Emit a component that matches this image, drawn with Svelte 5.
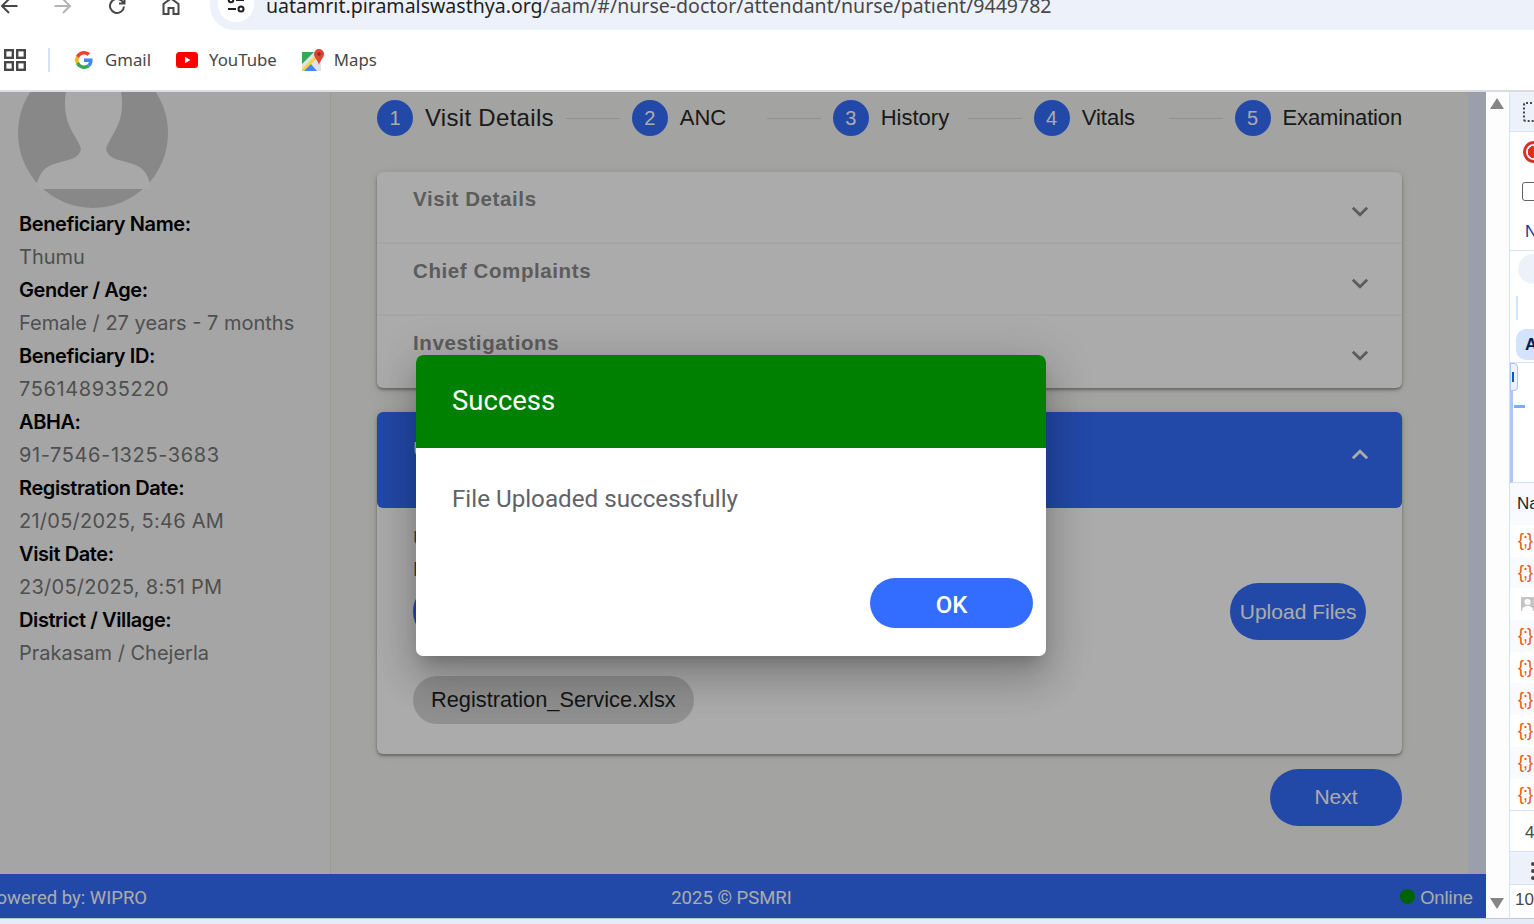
<script>
	const bookmarks = ['Gmail', 'YouTube', 'Maps'];

	const steps = [
		{ n: 1, label: 'Visit Details', big: true },
		{ n: 2, label: 'ANC' },
		{ n: 3, label: 'History' },
		{ n: 4, label: 'Vitals' },
		{ n: 5, label: 'Examination', last: true }
	];

	const fields = [
		{ label: 'Beneficiary Name:', value: 'Thumu' },
		{ label: 'Gender / Age:', value: 'Female / 27 years - 7 months' },
		{ label: 'Beneficiary ID:', value: '756148935220', kind: 'num' },
		{ label: 'ABHA:', value: '91-7546-1325-3683', kind: 'num' },
		{ label: 'Registration Date:', value: '21/05/2025, 5:46 AM', kind: 'date' },
		{ label: 'Visit Date:', value: '23/05/2025, 8:51 PM', kind: 'date' },
		{ label: 'District / Village:', value: 'Prakasam / Chejerla' }
	];

	const panels = ['Visit Details', 'Chief Complaints', 'Investigations'];

	// devtools network rows, clipped by the window edge
	const rows = ['js', 'js', 'img', 'js', 'js', 'js', 'js', 'js', 'js'];
</script>

<div class="window">
	<header class="chrome">
		<div class="toolbar">
			<svg class="nav" viewBox="0 0 18 18" fill="none" stroke="#474747" stroke-width="2">
				<path d="M17.500 9H2M9 2 2 9l7 7" />
			</svg>
			<svg class="nav" viewBox="0 0 18 18" fill="none" stroke="#b4b4b4" stroke-width="2">
				<path d="M.5 9H16M9 2l7 7-7 7" />
			</svg>
			<svg class="nav" viewBox="0 0 18 18" fill="none" stroke="#474747" stroke-width="2">
				<path d="M16 9.500A7 7 0 1 1 13.500 3.600L16 6M16.500 1v5.500H11" />
			</svg>
			<svg class="nav" viewBox="0 0 18 18" fill="none" stroke="#474747" stroke-width="2">
				<path d="M1.500 17V7L9 1.500 16.500 7v10h-5v-6h-5v6z" />
			</svg>
			<div class="address">
				<span class="site-icon">
					<svg viewBox="0 0 20 20" width="20" height="20" fill="none" stroke="#1f1f1f" stroke-width="2">
						<circle cx="5" cy="5" r="2.300" />
						<path d="M10 5h8M2 14h8" />
						<circle cx="15" cy="14" r="2.500" />
					</svg>
				</span>
				<span class="url"><b>uatamrit.piramalswasthya.org</b>/aam/#/nurse-doctor/attendant/nurse/patient/9449782</span>
			</div>
		</div>
		<div class="bookmarks">
			<svg class="apps" viewBox="0 0 22 22" fill="none" stroke="#474747" stroke-width="2.400">
				<rect x="1.200" y="1.200" width="7.600" height="7.600" />
				<rect x="13.200" y="1.200" width="7.600" height="7.600" />
				<rect x="1.200" y="13.200" width="7.600" height="7.600" />
				<rect x="13.200" y="13.200" width="7.600" height="7.600" />
			</svg>
			<span class="divider"></span>
			{#each bookmarks as name}
				<span class="bookmark {name.toLowerCase()}">
					{#if name === 'Gmail'}
						<svg viewBox="0 0 48 48" width="18" height="18">
							<path fill="#EA4335" d="M24 9.500c3.540 0 6.710 1.220 9.210 3.600l6.850-6.850C35.900 2.380 30.470 0 24 0 14.620 0 6.510 5.380 2.560 13.220l7.980 6.190C12.430 13.720 17.740 9.500 24 9.500z" />
							<path fill="#4285F4" d="M46.980 24.550c0-1.570-.15-3.090-.38-4.550H24v9.020h12.940c-.58 2.960-2.260 5.480-4.780 7.180l7.730 6c4.510-4.180 7.090-10.360 7.090-17.650z" />
							<path fill="#FBBC05" d="M10.530 28.590c-.48-1.450-.76-2.990-.76-4.590s.27-3.140.76-4.590l-7.980-6.190C.92 16.460 0 20.120 0 24c0 3.880.92 7.540 2.560 10.780l7.970-6.190z" />
							<path fill="#34A853" d="M24 48c6.480 0 11.930-2.130 15.890-5.810l-7.730-6c-2.150 1.450-4.920 2.300-8.160 2.300-6.260 0-11.570-4.220-13.470-9.910l-7.980 6.190C6.510 42.620 14.620 48 24 48z" />
						</svg>
					{:else if name === 'YouTube'}
						<svg viewBox="0 0 22 16" width="22" height="16">
							<rect width="22" height="16" rx="3.500" fill="#f00" />
							<path d="M9 4.800v6.400l5.400-3.200z" fill="#fff" />
						</svg>
					{:else}
						<svg viewBox="0 0 22 22" width="22" height="22">
							<path d="M0 3h19v19H0z" fill="#dfe3e6" />
							<path d="M0 3h12L0 15z" fill="#34a853" />
							<path d="M0 22h15l-7-8z" fill="#4285f4" />
							<path d="M0 20 14 6l2 2L2 22H0z" fill="#fbd13c" />
							<path d="M17 0a5 5 0 0 1 5 5c0 3.500-3.400 5.500-5 11-1.600-5.500-5-7.500-5-11a5 5 0 0 1 5-5z" fill="#db4437" />
							<circle cx="17" cy="5" r="1.800" fill="#8e2a22" />
						</svg>
					{/if}
					<span>{name}</span>
				</span>
			{/each}
		</div>
	</header>

	<div class="workspace">
		<div class="stage">
			<div class="page">
				<div class="content">
					<aside class="sidebar">
						<svg class="avatar" viewBox="0 0 150 150" width="150" height="150">
							<circle cx="75" cy="75" r="75" fill="#cbcbcb" />
							<path d="M18 131C20 118 24 110 36 106 48 102 58 102 62 94 64 90 62 88 60 84 54 72 47 65 47 45 47 20 60 8 75.500 8 91 8 104 20 104 45 104 65 97 72 91 84 89 88 87 90 89 94 93 102 103 102 115 106 127 110 131 118 133 131z" fill="#fbfbfb" />
						</svg>
						{#each fields as field}
							<div class="label">{field.label}</div>
							<div class="value {field.kind ?? ''}">{field.value}</div>
						{/each}
					</aside>

					<main class="main">
						<nav class="stepper">
							{#each steps as step}
								<span class="circle">{step.n}</span>
								<span class="step-label" class:big={step.big} class:tight={step.last}>{step.label}</span>
								{#if !step.last}<span class="line"></span>{/if}
							{/each}
						</nav>

						<section class="card accordion">
							{#each panels as title}
								<div class="panel">
									<span class="panel-title">{title}</span>
									<svg class="chevron" viewBox="0 0 16 10" fill="none" stroke="#8a8a8a" stroke-width="2.600">
										<path d="M1.500 1.500 8 8l6.500-6.500" />
									</svg>
								</div>
							{/each}
						</section>

						<section class="card upload">
							<div class="upload-head">
								<span>Upload Files</span>
								<svg class="chevron up" viewBox="0 0 16 10" fill="none" stroke="#fff" stroke-width="2.600">
									<path d="M1.500 8.500 8 2l6.500 6.500" />
								</svg>
							</div>
							<div class="upload-body">
								<p class="hint">Upload</p>
								<p class="hint">File</p>
								<div class="actions">
									<button class="pill">Choose</button>
									<button class="pill">Upload Files</button>
								</div>
								<span class="chip">Registration_Service.xlsx</span>
							</div>
						</section>

						<div class="next-row">
							<button class="pill next">Next</button>
						</div>
					</main>

					<div class="gutter"></div>
				</div>

				<footer class="footer">
					<span class="powered">Powered by: WIPRO</span>
					<span>2025 © PSMRI</span>
					<span class="online"><i></i>Online</span>
				</footer>
			</div>

			<div class="overlay">
				<div class="dialog">
					<div class="dialog-head">Success</div>
					<div class="dialog-body">File Uploaded successfully</div>
					<div class="dialog-actions">
						<button class="ok">OK</button>
					</div>
				</div>
			</div>
		</div>

		<div class="page-scroll">
			<span class="arrow"></span>
			<span class="arrow down"></span>
		</div>

		<div class="devtools">
			<div class="dt-row dt-top">
				<span class="dt-dots"></span>
			</div>
			<div class="dt-row dt-rec"><span class="rec"></span></div>
			<div class="dt-row dt-check"><span class="box"></span></div>
			<div class="dt-row dt-n">N</div>
			<div class="dt-filter">
				<span class="dt-search"></span>
				<span class="dt-bar"></span>
				<span class="dt-all">A</span>
			</div>
			<div class="dt-timeline">
				<span class="dt-handle"></span>
				<span class="dt-dash"></span>
			</div>
			<div class="dt-name">Na</div>
			{#each rows as kind, i}
				<div class="dt-file" class:alt={i % 2 === 1}>
					{#if kind === 'img'}
						<svg class="dt-img" viewBox="0 0 16 14" width="16" height="14">
							<rect width="16" height="14" fill="#c4c4c4" />
							<circle cx="6.500" cy="5" r="3" fill="#fff" />
							<path d="M1 14c0-4 3-5 5.500-5s5.500 1 5.500 5z" fill="#fff" />
						</svg>
					{:else}
						<span class="dt-js">{'{;}'}</span>
					{/if}
				</div>
			{/each}
			<div class="dt-count">4</div>
			<div class="dt-more"><span class="dt-kebab"></span></div>
			<div class="dt-ten">10</div>
		</div>
	</div>

	<div class="taskbar-edge"></div>
</div>

<style>
	:global(body) {
		margin: 0;
		overflow: hidden;
		background: #e4ecf8;
	}

	.window {
		width: 1534px;
		height: 924px;
		overflow: hidden;
		display: flex;
		flex-direction: column;
		font-family: 'Liberation Sans', Arial, sans-serif;
	}

	/* browser chrome */
	.chrome {
		height: 92px;
		flex: none;
		background: #fff;
		border-bottom: 2px solid #dadce0;
		box-sizing: border-box;
	}

	.toolbar {
		height: 30px;
		display: flex;
		overflow: hidden;
		align-items: flex-start;
	}

	.nav {
		width: 18px;
		height: 18px;
		margin-top: -3px;
		margin-right: 36px;
		flex: none;
	}

	.address {
		margin-left: -6px;
		flex: 1;
		height: 30px;
		background: #edf2fa;
		border-bottom-left-radius: 24px;
		display: flex;
		padding-left: 8px;
		gap: 12px;
		min-width: 0;
	}

	.site-icon {
		width: 36px;
		height: 22px;
		flex: none;
		background: #fff;
		border-radius: 0 0 18px 18px;
		display: flex;
		justify-content: center;
	}

	.site-icon svg {
		margin-top: -5px;
	}

	.url {
		font-family: 'Noto Sans', sans-serif;
		font-size: 19.540px;
		line-height: 18px;
		color: #474747;
		white-space: nowrap;
		margin-top: -3px;
	}

	.url b {
		font-weight: 400;
		color: #1f1f1f;
	}

	.bookmarks {
		height: 60px;
		display: flex;
		align-items: center;
	}

	.apps {
		width: 22px;
		height: 22px;
		margin-left: 4px;
		flex: none;
	}

	.divider {
		width: 2px;
		height: 24px;
		background: #d3e3fd;
		margin: 0 25px 0 22px;
	}

	.bookmark {
		display: flex;
		align-items: center;
		font-family: 'Noto Sans', sans-serif;
		font-size: 16.800px;
		color: #474747;
		margin-right: 25px;
	}

	.bookmark span {
		margin-top: -2px;
	}

	.bookmark svg {
		margin-right: 12px;
	}

	.bookmark.youtube svg {
		margin-right: 11px;
	}

	.bookmark.maps svg {
		margin-right: 10px;
	}

	/* application */
	.workspace {
		height: 826px;
		flex: none;
		display: flex;
	}

	.stage {
		width: 1486px;
		flex: none;
		position: relative;
		overflow: hidden;
	}

	.page {
		height: 100%;
		display: flex;
		flex-direction: column;
	}

	.content {
		flex: 1;
		display: flex;
		min-height: 0;
		background: #f3f3f0;
		overflow: hidden;
	}

	.sidebar {
		width: 331px;
		flex: none;
		box-sizing: border-box;
		background: #f7f7f7;
		border-right: 1px solid #e6e6e6;
		padding-left: 19px;
		font-family: Inter, sans-serif;
		line-height: 33px;
	}

	.avatar {
		display: block;
		margin: -34px 0 0 -1px;
	}

	.label {
		color: #000;
		font-size: 20px;
		font-weight: 600;
		letter-spacing: -0.4px;
	}

	.value {
		color: #767676;
		font-size: 20px;
	}

	.value.num {
		letter-spacing: 0.6px;
	}

	.value.date {
		letter-spacing: 0.25px;
	}

	.main {
		width: 1137px;
		flex: none;
		box-sizing: border-box;
		padding: 8px 66px 0 46px;
	}

	.stepper {
		height: 36px;
		display: flex;
		align-items: center;
	}

	.circle {
		width: 36px;
		height: 36px;
		flex: none;
		border-radius: 50%;
		background: #336dfb;
		color: #fff;
		font-size: 20px;
		display: flex;
		align-items: center;
		justify-content: center;
	}

	.step-label {
		margin-left: 12px;
		min-width: 75px;
		font-size: 22px;
		color: #272727;
		white-space: nowrap;
	}

	.step-label.big {
		font-size: 24px;
		letter-spacing: 0.3px;
	}

	.step-label.tight {
		letter-spacing: -0.15px;
	}

	.line {
		flex: 1;
		height: 1px;
		background: #d8d8d8;
		margin: 0 12px;
	}

	.card {
		background: #fff;
		border-radius: 6px;
		box-shadow: 0 2px 3px rgba(0, 0, 0, 0.32), 0 1px 8px rgba(0, 0, 0, 0.1);
	}

	.accordion {
		margin-top: 36px;
	}

	.panel {
		height: 72px;
		box-sizing: border-box;
		padding: 15px 33px 0 36px;
		display: flex;
		justify-content: space-between;
		border-bottom: 2px solid #f8f8f8;
		overflow: hidden;
	}

	.panel:last-child {
		border-bottom: 0;
	}

	.panel-title {
		font-size: 20.500px;
		line-height: 24px;
		font-weight: 700;
		color: #8a8a8a;
		letter-spacing: 0.6px;
	}

	.chevron {
		width: 18px;
		height: 11px;
		margin-top: 19px;
		flex: none;
	}

	.upload {
		margin-top: 24px;
	}

	.upload-head {
		height: 96px;
		box-sizing: border-box;
		background: #336dfb;
		border-radius: 6px;
		color: #fff;
		padding: 26px 33px 0 36px;
		font-size: 20px;
		display: flex;
		justify-content: space-between;
	}

	.chevron.up {
		margin-top: 11px;
	}

	.upload-body {
		height: 246px;
		box-sizing: border-box;
		padding: 15px 36px 0;
	}

	.hint {
		margin: 0;
		font-size: 20px;
		line-height: 31px;
		color: #6e5a48;
	}

	.actions {
		margin-top: -2px;
		display: flex;
		justify-content: space-between;
		align-items: center;
	}

	.pill {
		height: 57px;
		border: 0;
		border-radius: 29px;
		background: #336dfb;
		color: #fff;
		font-family: 'Liberation Sans', Arial, sans-serif;
		font-size: 21px;
		padding: 0 9.500px;
	}

	.chip {
		display: inline-block;
		margin-top: 36px;
		height: 48px;
		line-height: 48px;
		padding: 0 18px;
		border-radius: 24px;
		background: #d6d6d6;
		color: #1f1f1f;
		font-size: 21.800px;
	}

	.next-row {
		display: flex;
		justify-content: flex-end;
		margin-top: 15px;
	}

	.next {
		width: 132px;
		padding-bottom: 2px;
	}

	.gutter {
		flex: 1;
		background: #e6edff;
	}

	.footer {
		height: 44px;
		flex: none;
		box-sizing: border-box;
		margin-left: -24px;
		padding: 3px 13px 0 14px;
		background: #336dfb;
		color: #fff;
		display: grid;
		grid-template-columns: 1fr auto 1fr;
		align-items: center;
		font-family: Roboto, sans-serif;
		font-size: 18.500px;
	}

	.powered {
		margin-left: -5px;
	}

	.online {
		justify-self: end;
		display: flex;
		align-items: center;
		font-family: 'Liberation Sans', Arial, sans-serif;
		font-size: 18.300px;
	}

	.online i {
		width: 15px;
		height: 15px;
		border-radius: 50%;
		background: #009400;
		margin-right: 5px;
		margin-top: -3px;
	}

	/* modal */
	.overlay {
		position: absolute;
		inset: 0;
		padding-right: 24px;
		background: rgba(0, 0, 0, 0.33);
		display: flex;
		align-items: center;
		justify-content: center;
	}

	.dialog {
		width: 630px;
		height: 301px;
		background: #fff;
		border-radius: 7px;
		overflow: hidden;
		display: flex;
		flex-direction: column;
		font-family: Roboto, sans-serif;
		box-shadow: 0 11px 15px -7px rgba(0, 0, 0, 0.2), 0 24px 38px 3px rgba(0, 0, 0, 0.14), 0 9px 46px 8px rgba(0, 0, 0, 0.12);
	}

	.dialog-head {
		height: 93px;
		flex: none;
		box-sizing: border-box;
		padding-left: 36px;
		background: #008000;
		color: #fff;
		font-size: 27.500px;
		line-height: 91px;
	}

	.dialog-body {
		padding: 36px 36px 0;
		font-size: 24.200px;
		line-height: 30px;
		color: #5f6368;
	}

	.dialog-actions {
		margin-top: auto;
		padding: 0 13px 28px 0;
		display: flex;
		justify-content: flex-end;
	}

	.ok {
		width: 163px;
		height: 50px;
		border: 0;
		border-radius: 25px;
		padding: 4px 0 0;
		background: #336dff;
		color: #fff;
		font-family: Roboto, sans-serif;
		font-size: 24px;
		font-weight: 500;
	}

	/* browser scrollbar and devtools */
	.page-scroll {
		width: 23px;
		flex: none;
		background: #fdfdfd;
		box-sizing: border-box;
		padding: 6px 4px 9px;
		display: flex;
		flex-direction: column;
		justify-content: space-between;
	}

	.arrow {
		width: 0;
		height: 0;
		border: 7.500px solid transparent;
		border-top: 0;
		border-bottom: 11px solid #858585;
	}

	.arrow.down {
		border-bottom: 0;
		border-top: 11px solid #858585;
	}

	.devtools {
		flex: 1;
		min-width: 0;
		overflow: hidden;
		background: #fff;
		border-left: 1px solid #d3e3fd;
		font-family: 'Liberation Sans', Arial, sans-serif;
		font-size: 17px;
		color: #1f1f1f;
	}

	.dt-row {
		display: flex;
		align-items: center;
		padding-left: 13px;
		box-sizing: border-box;
	}

	.dt-top {
		height: 40px;
		background: #edf2fa;
		border-bottom: 1px solid #d3e3fd;
	}

	.dt-dots {
		width: 20px;
		height: 20px;
		flex: none;
		border: 2px dotted #474747;
		box-sizing: border-box;
		border-radius: 3px;
	}

	.dt-rec {
		height: 40px;
	}

	.rec {
		width: 22px;
		height: 22px;
		flex: none;
		box-sizing: border-box;
		border: 3px solid #d93025;
		border-radius: 50%;
		background: radial-gradient(circle, #d93025 0 6px, #fff 6.500px);
	}

	.dt-check {
		height: 38px;
		padding-left: 12px;
	}

	.box {
		width: 18px;
		height: 17px;
		flex: none;
		border: 1.500px solid #5f6368;
		border-radius: 3px;
	}

	.dt-n {
		height: 41px;
		padding: 3px 0 0 15px;
		color: #0b3d91;
		border-bottom: 1px solid #d3e3fd;
	}

	.dt-filter {
		height: 112px;
		position: relative;
		border-bottom: 1px solid #d3e3fd;
		box-sizing: border-box;
	}

	.dt-search {
		position: absolute;
		left: 8px;
		top: 3px;
		width: 40px;
		height: 30px;
		border-radius: 15px;
		background: #edf2fa;
	}

	.dt-bar {
		position: absolute;
		left: 6px;
		top: 45px;
		width: 2px;
		height: 24px;
		background: #d3e3fd;
	}

	.dt-all {
		position: absolute;
		left: 6px;
		top: 78px;
		width: 40px;
		height: 31px;
		border-radius: 10px;
		background: #d3e3fd;
		color: #041e49;
		font-weight: 700;
		line-height: 31px;
		padding-left: 9px;
	}

	.dt-timeline {
		height: 120px;
		position: relative;
		border-left: 3px solid #a8c7fa;
		box-sizing: border-box;
		border-bottom: 1px solid #d3e3fd;
	}

	.dt-handle {
		position: absolute;
		left: -3px;
		top: 0;
		width: 8px;
		height: 28px;
		box-sizing: border-box;
		background: #edf2fa;
		border: 1px solid #a8c7fa;
		border-radius: 0 4px 4px 0;
	}

	.dt-handle::after {
		content: '';
		position: absolute;
		left: 1px;
		top: 8px;
		width: 2px;
		height: 10px;
		background: #0b57d0;
	}

	.dt-dash {
		position: absolute;
		left: 1px;
		top: 42px;
		width: 11px;
		height: 3px;
		background: #7cacf8;
	}

	.dt-name {
		height: 42px;
		line-height: 42px;
		padding-left: 7px;
		background: #f8fafd;
		box-sizing: border-box;
	}

	.dt-file {
		height: 31.700px;
		padding-left: 8px;
		display: flex;
		align-items: center;
		white-space: nowrap;
	}

	.dt-file.alt {
		background: #f8fafd;
	}

	.dt-js {
		color: #e8590c;
		font-size: 18px;
		letter-spacing: -1px;
	}

	.dt-img {
		margin-left: 3px;
		flex: none;
	}

	.dt-count {
		height: 41px;
		line-height: 43px;
		padding-left: 15px;
		border-top: 1px solid #d3e3fd;
		box-sizing: border-box;
		color: #474747;
	}

	.dt-more {
		height: 34px;
		background: #edf2fa;
		border-top: 1px solid #d3e3fd;
		border-bottom: 1px solid #d3e3fd;
		box-sizing: border-box;
		position: relative;
	}

	.dt-kebab {
		position: absolute;
		left: 21px;
		top: 10px;
		width: 4px;
		height: 4px;
		border-radius: 50%;
		background: #474747;
		box-shadow: 0 7px #474747, 0 14px #474747;
	}

	.dt-ten {
		padding-left: 5px;
		line-height: 30px;
		color: #474747;
	}

	.taskbar-edge {
		height: 1px;
		background: #c4c7d0;
		flex: none;
	}
</style>
